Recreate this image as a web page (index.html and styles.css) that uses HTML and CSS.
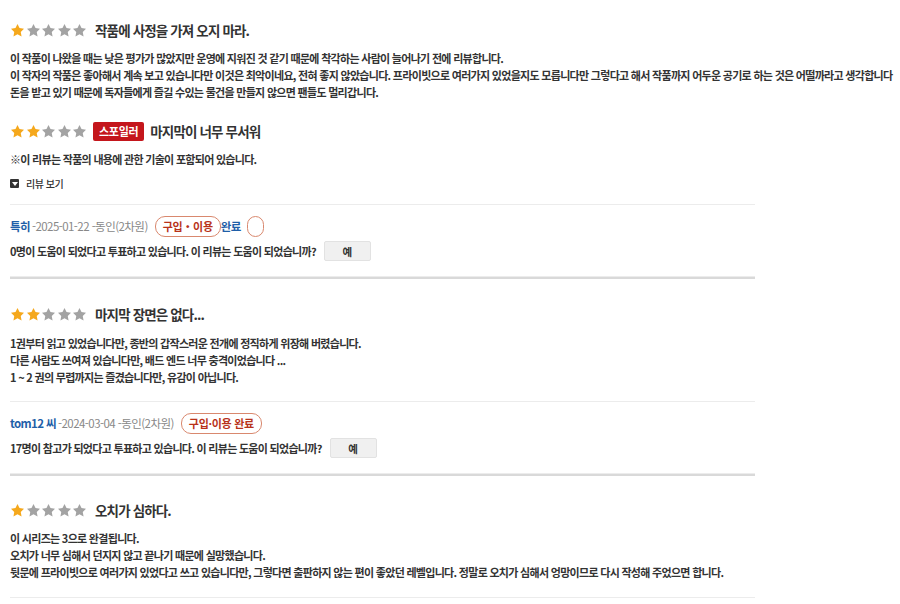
FILE: index.html
```html
<!DOCTYPE html>
<html lang="ko">
<head>
<meta charset="utf-8">
<link rel="stylesheet" href="styles.css">
<title>리뷰</title>
</head>
<body>
<svg width="0" height="0" class="defs">
  <defs>
    <path id="star" d="M12 1.5l3.2 6.6 7.2 1-5.2 5.1 1.3 7.2L12 18l-6.5 3.4 1.3-7.2L1.6 9.1l7.2-1z"/>
  </defs>
</svg>
<div class="list">

  <section class="review r1">
    <div class="head">
      <span class="stars"><svg class="on" viewBox="0 0 24 24"><use href="#star"/></svg><svg viewBox="0 0 24 24"><use href="#star"/></svg><svg viewBox="0 0 24 24"><use href="#star"/></svg><svg viewBox="0 0 24 24"><use href="#star"/></svg><svg viewBox="0 0 24 24"><use href="#star"/></svg></span>
      <h3 class="title">작품에 사정을 가져 오지 마라.</h3>
    </div>
    <div class="body">
      <p>이 작품이 나왔을 때는 낮은 평가가 많았지만 운영에 지워진 것 같기 때문에 착각하는 사람이 늘어나기 전에 리뷰합니다.</p>
      <p>이 작자의 작품은 좋아해서 계속 보고 있습니다만 이것은 최악이네요, 전혀 좋지 않았습니다. 프라이빗으로 여러가지 있었을지도 모릅니다만 그렇다고 해서 작품까지 어두운 공기로 하는 것은 어떨까라고 생각합니다</p>
      <p>돈을 받고 있기 때문에 독자들에게 즐길 수있는 물건을 만들지 않으면 팬들도 멀리갑니다.</p>
    </div>
  </section>

  <section class="review r2">
    <div class="head">
      <span class="stars"><svg class="on" viewBox="0 0 24 24"><use href="#star"/></svg><svg class="on" viewBox="0 0 24 24"><use href="#star"/></svg><svg viewBox="0 0 24 24"><use href="#star"/></svg><svg viewBox="0 0 24 24"><use href="#star"/></svg><svg viewBox="0 0 24 24"><use href="#star"/></svg></span>
      <span class="spoiler">스포일러</span>
      <h3 class="title">마지막이 너무 무서워</h3>
    </div>
    <p class="note">※이 리뷰는 작품의 내용에 관한 기술이 포함되어 있습니다.</p>
    <div class="toggle"><span class="tri"></span>리뷰 보기</div>
    <div class="sep"></div>
    <div class="meta"><span class="user">특히</span><span class="info">-2025-01-22 -동인(2차원)</span><span class="badge">구입・이용</span><span class="done">완료</span><span class="badge empty"></span></div>
    <div class="vote"><span>0명이 도움이 되었다고 투표하고 있습니다. 이 리뷰는 도움이 되었습니까?</span><button class="yes">예</button></div>
    <div class="thick"></div>
  </section>

  <section class="review r3">
    <div class="head">
      <span class="stars"><svg class="on" viewBox="0 0 24 24"><use href="#star"/></svg><svg class="on" viewBox="0 0 24 24"><use href="#star"/></svg><svg viewBox="0 0 24 24"><use href="#star"/></svg><svg viewBox="0 0 24 24"><use href="#star"/></svg><svg viewBox="0 0 24 24"><use href="#star"/></svg></span>
      <h3 class="title">마지막 장면은 없다...</h3>
    </div>
    <div class="body">
      <p>1권부터 읽고 있었습니다만, 종반의 갑작스러운 전개에 정직하게 위장해 버렸습니다.</p>
      <p>다른 사람도 쓰여져 있습니다만, 배드 엔드 너무 충격이었습니다 ...</p>
      <p>1 ~ 2 권의 무렵까지는 즐겼습니다만, 유감이 아닙니다.</p>
    </div>
    <div class="sep"></div>
    <div class="meta"><span class="user">tom12 씨</span><span class="info">-2024-03-04 -동인(2차원)</span><span class="badge">구입·이용 완료</span></div>
    <div class="vote"><span>17명이 참고가 되었다고 투표하고 있습니다. 이 리뷰는 도움이 되었습니까?</span><button class="yes">예</button></div>
    <div class="thick"></div>
  </section>

  <section class="review r4">
    <div class="head">
      <span class="stars"><svg class="on" viewBox="0 0 24 24"><use href="#star"/></svg><svg viewBox="0 0 24 24"><use href="#star"/></svg><svg viewBox="0 0 24 24"><use href="#star"/></svg><svg viewBox="0 0 24 24"><use href="#star"/></svg><svg viewBox="0 0 24 24"><use href="#star"/></svg></span>
      <h3 class="title">오치가 심하다.</h3>
    </div>
    <div class="body">
      <p>이 시리즈는 3으로 완결됩니다.</p>
      <p>오치가 너무 심해서 던지지 않고 끝나기 때문에 실망했습니다.</p>
      <p>뒷문에 프라이빗으로 여러가지 있었다고 쓰고 있습니다만, 그렇다면 출판하지 않는 편이 좋았던 레벨입니다. 정말로 오치가 심해서 엉망이므로 다시 작성해 주었으면 합니다.</p>
    </div>
    <div class="sep"></div>
  </section>

</div>
</body>
</html>
```

FILE: styles.css
```css
* { box-sizing: border-box; }
html, body { margin: 0; padding: 0; background: #fff; }
body {
  font-family: "Noto Sans CJK KR", "Noto Sans", sans-serif;
  color: #333;
  overflow: hidden;
}
.defs { position: absolute; }
.list { padding: 20px 0 0 10px; }
.review { width: 745px; }
.r2 { margin-top: 20px; }
.r3 { margin-top: 25px; }
.r4 { margin-top: 24px; }

.head { display: flex; align-items: center; height: 20px; }
.stars { display: flex; gap: 0.5px; margin-right: 8px; }
.stars svg { width: 15px; height: 15px; fill: #a3a3a3; display: block; }
.stars svg.on { fill: #f5a81c; }
.title {
  margin: 0;
  font-size: 13.5px;
  font-weight: 700;
  letter-spacing: -0.85px;
  color: #333;
  white-space: nowrap;
}
.spoiler {
  background: #c4161c;
  color: #fff;
  font-size: 11px;
  font-weight: 700;
  letter-spacing: -0.3px;
  height: 19px;
  line-height: 19px;
  padding: 0 6px;
  border-radius: 2px;
  margin: 0 6px 0 -2px;
}

.body { margin-top: 10px; }
.r3 .body { margin-top: 11px; }
.r4 .body { margin-top: 10px; }
.body p, .note {
  margin: 0;
  font-size: 11px;
  line-height: 17px;
  font-weight: 700;
  letter-spacing: -0.7px;
  white-space: nowrap;
}
.note { margin-top: 10px; }
.toggle {
  margin-top: 7px;
  display: flex;
  align-items: center;
  font-size: 10px;
  font-weight: 500;
  line-height: 17px;
  letter-spacing: -0.5px;
}
.tri {
  width: 9px; height: 9px;
  background: #333;
  border-radius: 1px;
  margin-right: 7px;
  position: relative;
}
.tri::after {
  content: "";
  position: absolute;
  left: 1.5px; top: 2.5px;
  border-left: 3px solid transparent;
  border-right: 3px solid transparent;
  border-top: 4px solid #fff;
}

.sep { height: 1px; background: #ececec; margin-top: 12px; }
.r3 .sep { margin-top: 15px; }
.r4 .sep { margin-top: 16px; }
.meta {
  margin-top: 10px;
  height: 22px;
  display: flex;
  align-items: center;
  font-size: 11.5px;
  letter-spacing: -0.55px;
  white-space: nowrap;
}
.user { color: #1f5fa8; font-weight: 700; margin-right: 2px; letter-spacing: -0.6px; }
.info { color: #888; margin-right: 7px; }
.badge {
  display: inline-block;
  height: 21px;
  line-height: 19px;
  border: 1px solid #d9886e;
  border-radius: 10px;
  color: #b8321a;
  font-weight: 700;
  font-size: 11px;
  letter-spacing: -0.3px;
  padding: 0 7px;
}
.badge.empty { width: 17px; padding: 0; margin-left: 6px; }
.done { color: #1f5fa8; font-weight: 700; font-size: 11.5px; }

.vote {
  margin-top: 4px;
  display: flex;
  align-items: center;
  height: 20px;
  font-size: 11px;
  font-weight: 700;
  letter-spacing: -0.7px;
  white-space: nowrap;
}
.yes {
  margin-left: 8px;
  width: 47px;
  height: 20px;
  background: #f0f0f0;
  border: 1px solid #e2e2e2;
  border-radius: 2px;
  font-family: inherit;
  font-size: 10.5px;
  font-weight: 700;
  color: #333;
  padding: 0;
}
.thick {
  margin-top: 15px;
  height: 3px;
  background: #d9d9d9;
  border-top: 1px solid #ececec;
}
```
